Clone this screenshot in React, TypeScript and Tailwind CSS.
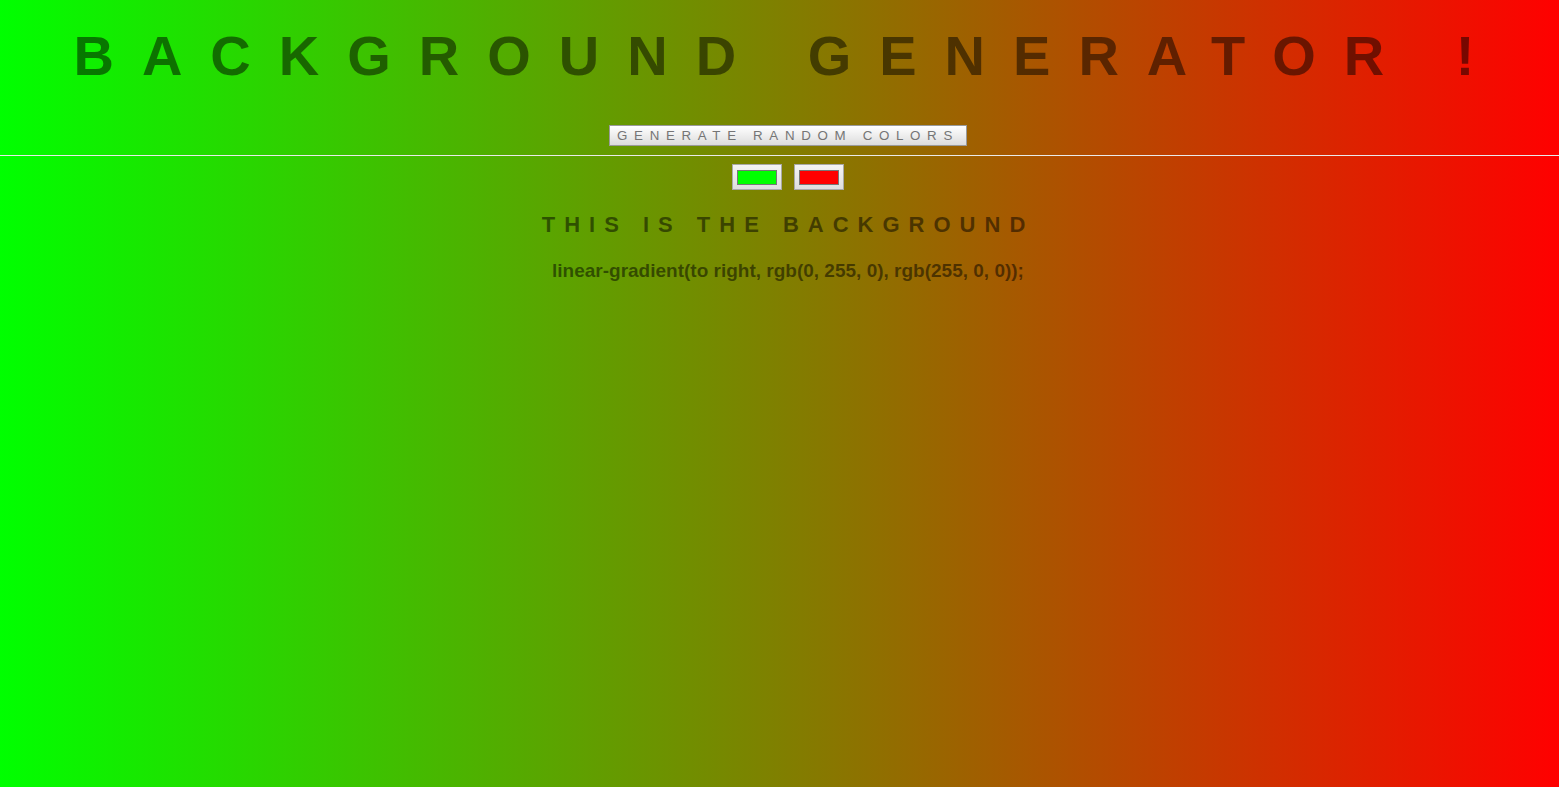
export default function App() {
  return (
    <div className="min-h-screen w-full bg-[linear-gradient(to_right,#00ff00,#ff0000)] font-['Liberation_Sans',Arial,sans-serif] text-black/50">
      {/* Title */}
      <h1 className="pl-[17px] pt-[24px] text-center text-[56px] font-bold leading-[64px] tracking-[0.5em]">
        BACKGROUND GENERATOR !
      </h1>

      {/* Random button */}
      <div className="mt-[37px] flex justify-center pl-[17px]">
        <button className="flex h-[21px] items-center border border-[#9a9a9a] bg-[linear-gradient(to_bottom,#ffffff,#dcdcdc)] px-[7px] text-[13.33px] leading-none tracking-[0.5em] text-[#757575]">
          GENERATE RANDOM COLORS
        </button>
      </div>

      <div className="mt-[9px] h-px w-full bg-[#eaeaea]" />

      {/* Colour pickers */}
      <div className="mt-[8px] flex justify-center gap-[12px] pl-[17px]">
        {["#00ff00", "#ff0000"].map((c) => (
          <div
            key={c}
            className="flex h-[26px] w-[50px] items-center justify-center border border-[#a9a9a9] bg-[linear-gradient(to_bottom,#f4f4f4,#dedede)]"
          >
            <div className="h-[15px] w-[40px] border border-[#777777]" style={{ backgroundColor: c }} />
          </div>
        ))}
      </div>

      <h3 className="mt-[22px] pl-[17px] text-center text-[22px] font-bold leading-[26px] tracking-[9px]">
        THIS IS THE BACKGROUND
      </h3>

      <p className="mt-[22px] pl-[17px] text-center text-[19px] font-bold leading-[22px]">
        linear-gradient(to right, rgb(0, 255, 0), rgb(255, 0, 0));
      </p>
    </div>
  );
}
